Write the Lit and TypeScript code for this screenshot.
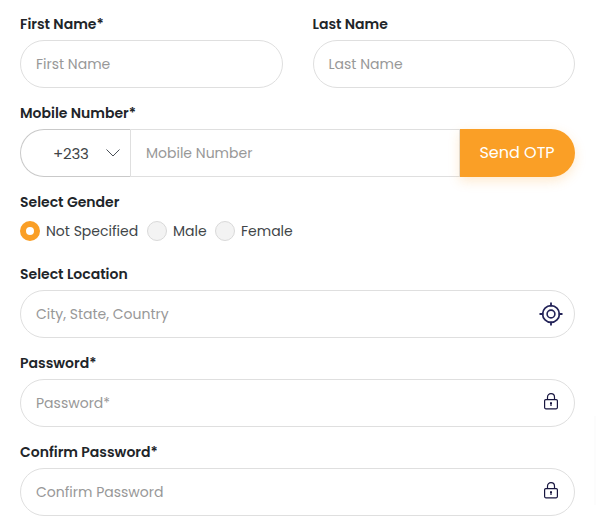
import { LitElement, html, css, svg, nothing } from "lit";
import { customElement, property } from "lit/decorators.js";

const targetIcon = html`<svg class="target" width="24" height="24" viewBox="0 0 24 24" fill="none">
  ${svg`<circle cx="12" cy="12" r="8.4" stroke="#232358" stroke-width="1.7"/>
  <circle cx="12" cy="12" r="3.9" stroke="#232358" stroke-width="1.6"/>
  <path d="M12 0.5V4.5M12 19.5V23.5M0.5 12H4.5M19.5 12H23.5" stroke="#232358" stroke-width="1.8"/>`}
</svg>`;

const lockIcon = html`<svg class="lock" width="14" height="17" viewBox="0 0 14 17" fill="none">
  ${svg`<rect x="0.6" y="6.6" width="12.8" height="9.2" rx="1.2" stroke="#17153f" stroke-width="1.2"/>
  <path d="M3.5 6.6V4.2C3.5 2.1 5 0.7 7 0.7S10.5 2.1 10.5 4.2V6.6" stroke="#17153f" stroke-width="1.2"/>
  <path d="M6 9.2H8V10.9H7.6V13H6.4V10.9H6Z" fill="#17153f"/>`}
</svg>`;

const icons = { target: targetIcon, lock: lockIcon };

@customElement("form-field")
class FormField extends LitElement {
  @property() label = "";
  @property() hint = "";
  @property() icon: "" | "target" | "lock" = "";

  static styles = css`
    :host { display: block; }
    .label {
      height: 22px; line-height: 22px; margin-bottom: 5px;
      font-weight: 600; font-size: 14px; color: #212529; white-space: nowrap;
    }
    .box {
      box-sizing: border-box; height: 48px; padding: 0 11px 0 15px;
      display: flex; align-items: center; justify-content: space-between;
      border: 1px solid #dfdfdf; border-radius: 24px; background: #fff;
    }
    .hint { font-size: 14px; line-height: 20px; color: #989898; white-space: nowrap; }
    svg { display: block; flex: none; }
    .lock { margin: 0 5px 3px 0; }
  `;

  render() {
    return html`
      <div class="label">${this.label}</div>
      <slot>
        <div class="box">
          <span class="hint">${this.hint}</span>
          ${this.icon ? icons[this.icon] : nothing}
        </div>
      </slot>`;
  }
}

@customElement("app-root")
class AppRoot extends LitElement {
  static styles = css`
    :host {
      display: block; position: relative; box-sizing: border-box; height: 532px; padding: 13px 21px 0 20px;
      overflow: hidden; background: #fff; color: #414548;
      font-family: Poppins, Inter, "Open Sans", sans-serif;
    }
    .form { display: flex; flex-direction: column; gap: 14px; }
    .names { display: grid; grid-template-columns: 1fr 1fr; gap: 30px; }
    .phone { display: flex; height: 48px; }
    .code, .number { box-sizing: border-box; display: flex; align-items: center; }
    .code {
      width: 111px; padding: 0 10px 0 32px; justify-content: space-between;
      border: 1px solid #c9c9c9; border-right-color: #dfdfdf; border-radius: 24px 0 0 24px;
      font-size: 15px; letter-spacing: -0.2px;
    }
    .number {
      flex: 1; padding-left: 15px; border: 1px solid #dfdfdf; border-left: 0;
      color: #989898; font-size: 14px;
    }
    .send {
      box-sizing: border-box; width: 115px; padding: 0 1px 1px 0;
      display: flex; align-items: center; justify-content: center;
      background: #fa9f26; color: #fff; font-size: 16px; border-radius: 0 24px 24px 0;
      box-shadow: 0 4px 12px rgba(250, 159, 38, 0.22);
    }
    .choices { display: grid; grid-template-columns: 127px 68px auto; height: 20px; padding: 3px 0 8px; }
    .choice { display: flex; align-items: center; gap: 6px; font-size: 14px; line-height: 20px; white-space: nowrap; }
    .dot {
      box-sizing: border-box; width: 20px; height: 20px; flex: none;
      border: 1px solid #d9d9d9; border-radius: 50%; background: #f3f3f3;
    }
    .on { border: 6px solid #fa9f26; background: #fff; }
    .edge { position: absolute; right: 0; top: 416px; width: 2px; height: 89px; background: #fcfcfc; }
  `;

  render() {
    return html`
      <div class="form">
        <div class="names">
          <form-field label="First Name*" hint="First Name"></form-field>
          <form-field label="Last Name" hint="Last Name"></form-field>
        </div>
        <form-field label="Mobile Number*">
          <div class="phone">
            <div class="code">
              <span>+233</span>
              <svg width="14" height="8" viewBox="0 0 14 8" fill="none">
                <path d="M0.5 0.5L7 7L13.5 0.5" stroke="#495057" />
              </svg>
            </div>
            <div class="number">Mobile Number</div>
            <div class="send">Send OTP</div>
          </div>
        </form-field>
        <form-field label="Select Gender">
          <div class="choices">
            ${["Not Specified", "Male", "Female"].map(
              (name, i) => html`<div class="choice"><span class="dot ${i === 0 ? "on" : ""}"></span><span>${name}</span></div>`
            )}
          </div>
        </form-field>
        <form-field label="Select Location" hint="City, State, Country" icon="target"></form-field>
        <form-field label="Password*" hint="Password*" icon="lock"></form-field>
        <form-field label="Confirm Password*" hint="Confirm Password" icon="lock"></form-field>
      </div>
      <div class="edge"></div>`;
  }
}
